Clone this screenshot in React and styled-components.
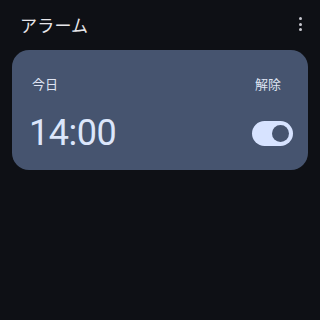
import React, { useState } from "react";
import styled, { createGlobalStyle } from "styled-components";

const GlobalStyle = createGlobalStyle`
  html, body {
    margin: 0;
    padding: 0;
    background: #0e1015;
  }
  body {
    font-family: Roboto, "Noto Sans CJK JP", "Noto Sans", sans-serif;
  }
`;

const Screen = styled.div`
  width: 320px;
  height: 320px;
  background: #0e1015;
  color: #e3e3e8;
  box-sizing: border-box;
  padding: 0 12px;
  overflow: hidden;
`;

const TopBar = styled.div`
  height: 50px;
  display: flex;
  align-items: center;
  justify-content: space-between;
  padding: 0 8px 2px 8px;
  box-sizing: border-box;
`;

const Title = styled.h1`
  margin: 0;
  font-size: 17px;
  font-weight: 400;
  color: #e6e6ea;
  letter-spacing: 0.2px;
`;

const MenuButton = styled.div`
  display: flex;
  flex-direction: column;
  gap: 2.5px;
  padding: 4px 4px;
  margin-right: -6px;
`;

const Dot = styled.span`
  width: 3px;
  height: 3px;
  border-radius: 50%;
  background: #c8c9d0;
`;

const Card = styled.div`
  height: 120px;
  background: #46546f;
  border-radius: 17px;
  padding: 24px 15px 0 20px;
  box-sizing: border-box;
  display: flex;
  flex-direction: column;
`;

const Row = styled.div`
  display: flex;
  align-items: center;
  justify-content: space-between;
  margin-top: ${(p) => p.gap || 0}px;
`;

const Label = styled.span`
  font-size: 13px;
  color: #dfe4f2;
`;

const Dismiss = styled(Label)`
  margin-right: 12px;
`;

const Time = styled.span`
  font-size: 36px;
  font-weight: 400;
  color: #dce6fb;
  letter-spacing: -0.5px;
  margin-left: -3px;
`;

const Toggle = styled.div`
  width: 41px;
  height: 25px;
  border-radius: 13px;
  background: ${(p) => (p.$on ? "#d7e3ff" : "#7a8296")};
  display: flex;
  align-items: center;
  justify-content: ${(p) => (p.$on ? "flex-end" : "flex-start")};
  padding: 0 4px;
  box-sizing: border-box;
  cursor: pointer;
`;

const Thumb = styled.span`
  width: 17px;
  height: 17px;
  border-radius: 50%;
  background: #46546f;
`;

export default function App() {
  const [on, setOn] = useState(true);
  return (
    <>
      <GlobalStyle />
      <Screen>
        <TopBar>
          <Title>アラーム</Title>
          <MenuButton>
            <Dot />
            <Dot />
            <Dot />
          </MenuButton>
        </TopBar>
        <Card>
          <Row>
            <Label>今日</Label>
            <Dismiss>解除</Dismiss>
          </Row>
          <Row gap={19}>
            <Time>14:00</Time>
            <Toggle $on={on} onClick={() => setOn(!on)}>
              <Thumb />
            </Toggle>
          </Row>
        </Card>
      </Screen>
    </>
  );
}
